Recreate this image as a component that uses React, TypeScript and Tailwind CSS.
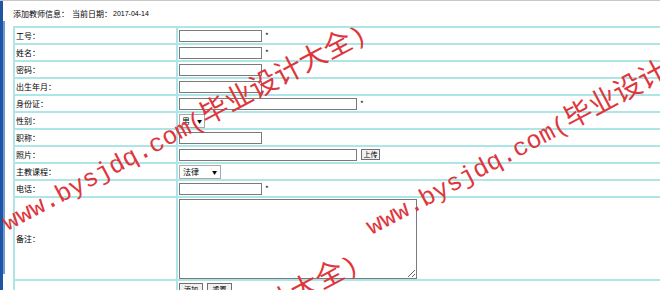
import React from 'react';

const rows: { label: string; field: 'short' | 'long' | 'sex' | 'photo' | 'course'; star?: boolean }[] = [
  { label: '工号：', field: 'short', star: true },
  { label: '姓名：', field: 'short', star: true },
  { label: '密码：', field: 'short' },
  { label: '出生年月：', field: 'short' },
  { label: '身份证：', field: 'long', star: true },
  { label: '性别：', field: 'sex' },
  { label: '职称：', field: 'short' },
  { label: '照片：', field: 'photo' },
  { label: '主教课程：', field: 'course' },
  { label: '电话：', field: 'short', star: true },
];

const Field: React.FC<{ field: string; star?: boolean }> = ({ field, star }) => {
  if (field === 'sex') {
    return (
      <div className="flex h-[14px] w-[26px] items-center justify-between border border-[#a9a9a9] bg-white px-[2px]">
        <span>男</span>
        <span className="text-[5px]">▼</span>
      </div>
    );
  }
  if (field === 'course') {
    return (
      <div className="flex h-[14px] w-[42px] items-center justify-between border border-[#a9a9a9] bg-white px-[3px]">
        <span>法律</span>
        <span className="text-[5px]">▼</span>
      </div>
    );
  }
  return (
    <div className="flex items-center">
      <div className={`h-[12px] border border-[#7a7a7a] bg-white ${field === 'short' ? 'w-[83px]' : 'w-[178px]'}`} />
      {star && <span className="ml-[3px] text-[8px]">*</span>}
      {field === 'photo' && (
        <div className="ml-[4px] flex h-[11px] w-[19px] items-center justify-center border border-[#707070] bg-[#f0f0f0] text-[7px] leading-none">
          上传
        </div>
      )}
    </div>
  );
};

// site watermark, repeated diagonally over the page
const Watermark: React.FC<{ className: string }> = ({ className }) => (
  <span
    className={`pointer-events-none absolute origin-left -rotate-[28deg] whitespace-nowrap leading-[28px] text-[#df363d] ${className}`}
  >
    <span className="text-[25px] font-['Liberation_Mono',monospace]">www.bysjdq.com(</span>
    <span className="text-[28px] font-['Noto_Sans_CJK_SC',sans-serif]">毕业设计大全</span>
    <span className="text-[25px] font-['Liberation_Mono',monospace]">)</span>
  </span>
);

const App: React.FC = () => {
  return (
    <div className="relative h-[290px] w-[660px] overflow-hidden bg-white text-[8px] leading-none text-black font-['Noto_Sans_CJK_SC','Noto_Sans',sans-serif]">
      {/* top rule */}
      <div className="h-px bg-[#c8c8c8]" />

      <div className="flex h-[289px]">
        {/* left frame edge */}
        <div className="flex">
          <div className="w-[3px] bg-[#1f55a3]" />
          <div className="flex w-[2px] flex-col">
            <div className="h-[20px]" />
            <div className="h-[253px] bg-[#6d9bd6]" />
          </div>
        </div>

        <div className="flex-1 pl-[8px]">
          {/* header */}
          <div className="flex h-[25px] items-center">
            <span>添加教师信息：</span>
            <span className="ml-[3px]">当前日期：</span>
            <span className="ml-px text-[7px] font-['Liberation_Sans',sans-serif]">2017-04-14</span>
          </div>

          {/* form table */}
          <div className="w-[700px] border-t-2 border-[#aee6e8]">
            {rows.map((r) => (
              <div key={r.label} className="grid h-[17px] grid-cols-[163px_1fr] border-b-2 border-[#aee6e8]">
                <div className="flex items-center border-l-2 border-[#aee6e8] pl-px">{r.label}</div>
                <div className="flex items-center border-l-2 border-[#aee6e8] pl-px">
                  <Field field={r.field} star={r.star} />
                </div>
              </div>
            ))}
            <div className="grid h-[83px] grid-cols-[163px_1fr] border-b-2 border-[#aee6e8]">
              <div className="flex items-center border-l-2 border-[#aee6e8] pl-px">备注：</div>
              <div className="border-l-2 border-[#aee6e8] pl-px pt-px">
                <textarea className="block h-[80px] w-[238px] border border-[#7a7a7a] bg-white" />
              </div>
            </div>
            <div className="grid h-[17px] grid-cols-[163px_1fr]">
              <div className="border-l-2 border-[#aee6e8]" />
              <div className="flex items-start gap-[4px] border-l-2 border-[#aee6e8] pl-px pt-[2px]">
                <div className="flex h-[13px] w-[24px] items-center justify-center border border-[#707070] bg-[#f0f0f0] text-[7px]">添加</div>
                <div className="flex h-[13px] w-[25px] items-center justify-center border border-[#707070] bg-[#f0f0f0] text-[7px]">重置</div>
              </div>
            </div>
          </div>
        </div>
      </div>

      <Watermark className="left-[4px] top-[206px]" />
      <Watermark className="left-[368px] top-[210px]" />
      <Watermark className="left-[-4px] top-[436px]" />
    </div>
  );
};

export default App;
